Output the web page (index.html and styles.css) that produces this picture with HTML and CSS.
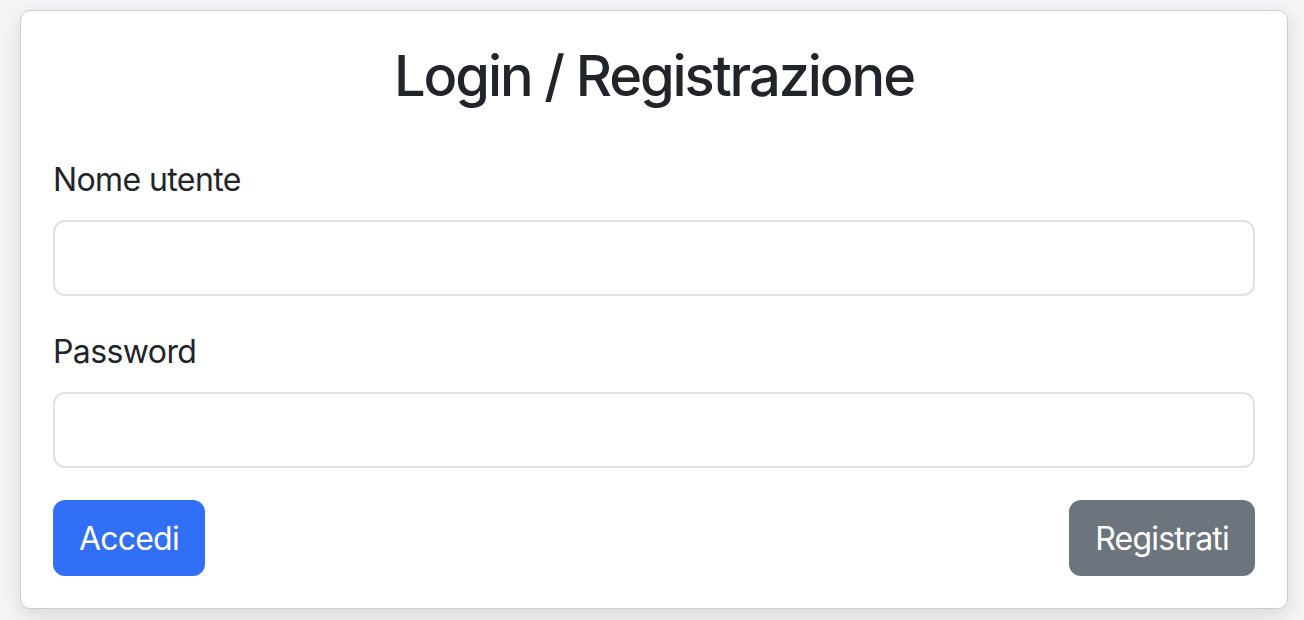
FILE: index.html
```html
<!DOCTYPE html>
<html lang="it">
<head>
<meta charset="utf-8">
<title>Login / Registrazione</title>
<link rel="stylesheet" href="styles.css">
</head>
<body>
<div class="page">
  <div class="card">
    <h2 class="title">Login / Registrazione</h2>
    <form class="form">
      <div class="field">
        <label class="label" for="u">Nome utente</label>
        <input class="input" id="u" type="text">
      </div>
      <div class="field">
        <label class="label" for="p">Password</label>
        <input class="input" id="p" type="password">
      </div>
      <div class="actions">
        <button type="button" class="btn btn-primary">Accedi</button>
        <button type="button" class="btn btn-secondary">Registrati</button>
      </div>
    </form>
  </div>
</div>
</body>
</html>
```
FILE: styles.css
```css
html, body {
  margin: 0;
  padding: 0;
  background: #f4f5f7;
}
body {
  font-family: Inter, "Noto Sans", "Liberation Sans", sans-serif;
  color: #212529;
}
.page {
  padding: 10px 16px 12px 20px;
}
.card {
  background: #fff;
  border: 1px solid #cdcdcf;
  border-radius: 10px;
  padding: 32px;
  box-shadow: 0 6px 20px rgba(0, 0, 0, 0.12);
}
.title {
  margin: 0 0 46px;
  font-size: 56px;
  font-weight: 500;
  line-height: 1.2;
  letter-spacing: -2.1px;
  text-align: center;
}
.form {
  display: flex;
  flex-direction: column;
}
.field {
  display: flex;
  flex-direction: column;
  margin-bottom: 32px;
}
.label {
  font-size: 32px;
  line-height: 48px;
  letter-spacing: -0.6px;
  margin-bottom: 16px;
}
.input {
  height: 76px;
  box-sizing: border-box;
  border: 2px solid #dee2e6;
  border-radius: 12px;
  font: inherit;
  font-size: 32px;
  padding: 12px 24px;
  background: #fff;
}
.actions {
  display: flex;
  justify-content: space-between;
}
.btn {
  height: 76px;
  box-sizing: border-box;
  border: 0;
  border-radius: 12px;
  padding: 0 26px;
  font-family: inherit;
  font-size: 32px;
  letter-spacing: -0.8px;
  color: #fff;
}
.btn-primary {
  background: #316ff6;
}
.btn-secondary {
  background: #6c757d;
}
```
